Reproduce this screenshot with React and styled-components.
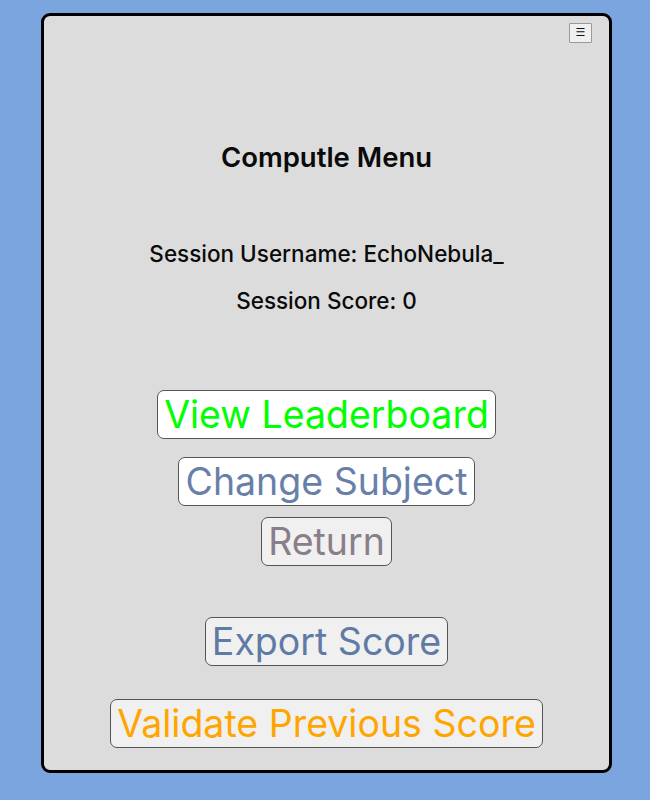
import styled, { createGlobalStyle } from 'styled-components'

const Global = createGlobalStyle`
  html, body {
    margin: 0;
    padding: 0;
    background: #7ba5de;
    font-family: Inter, "Noto Sans", sans-serif;
  }
`

const Panel = styled.div`
  box-sizing: border-box;
  width: 571px;
  height: 760px;
  margin: 13px 0 0 41px;
  background: #dcdcdc;
  border: 3px solid #000;
  border-radius: 9px;
  display: flex;
  flex-direction: column;
  align-items: center;
`

const TopBar = styled.div`
  align-self: stretch;
  display: flex;
  justify-content: flex-end;
  padding: 7px 17px 0 0;
`

const MenuButton = styled.button`
  box-sizing: border-box;
  width: 23px;
  height: 20px;
  padding: 0;
  background: #f0f0f0;
  border: 1px solid #9a9a9a;
  border-radius: 1px;
  font-size: 11px;
  line-height: 18px;
  color: #111;
  font-family: "DejaVu Sans", sans-serif;
`

const Title = styled.h1`
  margin: 98px 0 0;
  font-size: 27.5px;
  line-height: 32px;
  font-weight: 600;
  color: #0a0a0a;
`

const Info = styled.p`
  margin: ${p => p.$top}px 0 0;
  font-size: 22.5px;
  line-height: 28px;
  font-weight: 500;
  color: #0a0a0a;
`

const MenuAction = styled.button`
  box-sizing: border-box;
  margin-top: ${p => p.$top}px;
  height: 49px;
  padding: 1px 6px 0;
  background: ${p => p.$bg || '#f0f0f0'};
  border: 1px solid #555;
  border-radius: 7px;
  font-family: Inter, "Noto Sans", sans-serif;
  font-size: 37.5px;
  line-height: 46px;
  color: ${p => p.$color};
`

export default function App() {
  return (
    <>
      <Global />
      <Panel>
        <TopBar>
          <MenuButton>☰</MenuButton>
        </TopBar>
        <Title>Computle Menu</Title>
        <Info $top={67}>Session Username: EchoNebula_</Info>
        <Info $top={19}>Session Score: 0</Info>
        <MenuAction $top={75} $bg="#fff" $color="#00ff00">View Leaderboard</MenuAction>
        <MenuAction $top={18} $bg="#fff" $color="#6880a8">Change Subject</MenuAction>
        <MenuAction $top={11} $color="#8a7e8a">Return</MenuAction>
        <MenuAction $top={51} $color="#5f7ba5">Export Score</MenuAction>
        <MenuAction $top={33} $color="#ffa500">Validate Previous Score</MenuAction>
      </Panel>
    </>
  )
}
